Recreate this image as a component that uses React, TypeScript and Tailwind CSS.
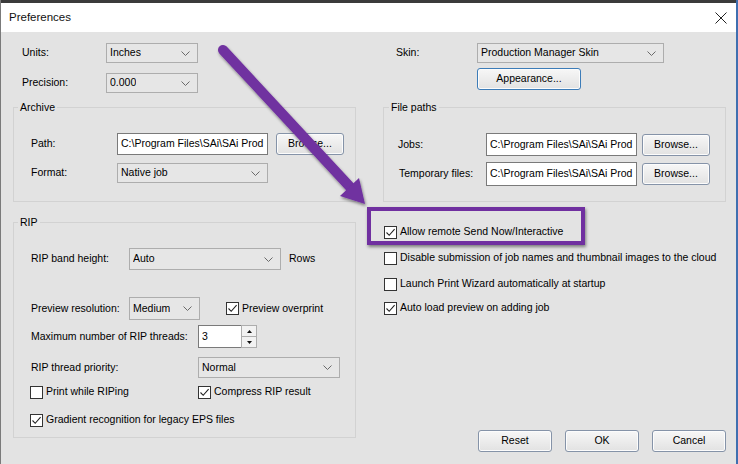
import React from 'react'

const font = { fontFamily: '"Liberation Sans", Arial, sans-serif' }

function Chevron() {
  return (
    <svg width="9" height="5" viewBox="0 0 9 5" className="shrink-0">
      <path d="M0.5 0.5 L4.5 4.5 L8.5 0.5" fill="none" stroke="#6a6a6a" strokeWidth="1" />
    </svg>
  )
}

function Select({ value, w, h = 20 }: { value: string; w: string; h?: number }) {
  return (
    <div
      className={`${w} flex items-center justify-between border border-[#adadad] bg-[#e6e6e6] pl-[3px] pr-[7px]`}
      style={{ height: h }}
    >
      <span className="truncate">{value}</span>
      <Chevron />
    </div>
  )
}

function TextInput({ value, h = 22 }: { value: string; h?: number }) {
  return (
    <div
      className="w-[151px] flex items-center whitespace-nowrap border border-[#7a7a7a] bg-white pl-[3px]"
      style={{ height: h }}
    >
      {value}
    </div>
  )
}

function Button({ label, w, focus }: { label: string; w: string; focus?: boolean }) {
  return (
    <button
      type="button"
      className={`${w} h-[22px] rounded-[3px] border bg-gradient-to-b from-[#f7f7f7] to-[#e2e2e2] text-[10.5px] text-black shadow-[inset_0_0_0_1px_#fcfcfc] ${
        focus ? 'border-[#3c7cb8]' : 'border-[#8593a8]'
      }`}
    >
      {label}
    </button>
  )
}

function Check({ checked, label }: { checked?: boolean; label: string }) {
  return (
    <div className="flex h-[14px] items-center">
      <div className="flex h-[13px] w-[13px] shrink-0 items-center justify-center border border-[#333] bg-white">
        {checked && (
          <svg width="11" height="11" viewBox="0 0 11 11">
            <path d="M1.5 5.5 L4.2 8.3 L9.6 2.2" fill="none" stroke="#222" strokeWidth="1.1" />
          </svg>
        )}
      </div>
      <span className="ml-[3px] whitespace-nowrap">{label}</span>
    </div>
  )
}

function Group({ title, legendMl, className, children }: { title: string; legendMl: string; className: string; children: React.ReactNode }) {
  return (
    <fieldset className={`border border-[#d2d2d2] ${className}`}>
      <legend className={`${legendMl} px-[2px] leading-[14px]`}>{title}</legend>
      {children}
    </fieldset>
  )
}

const PATH = 'C:\\Program Files\\SAi\\SAi Prod'

export default function App() {
  return (
    <div
      className="relative flex h-[464px] w-[738px] flex-col overflow-hidden border-l border-r-2 border-l-[#7a7a7a] border-r-[#3f6fb0] text-[10.5px] text-black"
      style={font}
    >
      {/* strip of the window behind */}
      <div className="h-[3px] shrink-0 bg-[#3b3b3b]" />

      {/* title bar */}
      <div className="flex h-[29px] shrink-0 items-center justify-between bg-white pl-[8px] pr-[9px]">
        <span className="text-[11.5px] text-[#111]">Preferences</span>
        <svg width="12" height="12" viewBox="0 0 12 12">
          <path d="M0.5 0.5 L11.5 11.5 M11.5 0.5 L0.5 11.5" stroke="#222" strokeWidth="1" />
        </svg>
      </div>

      {/* body */}
      <div className="grid flex-1 grid-cols-[343px_343px] gap-x-[27px] bg-[#e3e3e3] pl-[12px]">
        {/* left column */}
        <div className="flex flex-col">
          <div className="mt-[11px] flex items-center">
            <span className="w-[93px] pl-[9px]">Units:</span>
            <Select value="Inches" w="w-[92px]" />
          </div>
          <div className="mt-[10px] flex items-center">
            <span className="w-[93px] pl-[9px]">Precision:</span>
            <Select value="0.000" w="w-[92px]" />
          </div>

          <Group title="Archive" legendMl="ml-[4px]" className="mt-[7px] h-[102px]">
            <div className="mt-[19px] flex items-center">
              <span className="w-[103px] pl-[17px]">Path:</span>
              <TextInput value={PATH} />
              <div className="ml-[8px]">
                <Button label="Browse..." w="w-[68px]" />
              </div>
            </div>
            <div className="mt-[8px] flex items-center">
              <span className="w-[103px] pl-[17px]">Format:</span>
              <Select value="Native job" w="w-[151px]" />
            </div>
          </Group>

          <Group title="RIP" legendMl="ml-[4px]" className="mt-[13px] h-[223px]">
            <div className="mt-[19px] flex items-center">
              <span className="w-[115px] pl-[17px]">RIP band height:</span>
              <Select value="Auto" w="w-[152px]" h={22} />
              <span className="ml-[8px]">Rows</span>
            </div>
            <div className="mt-[27px] flex items-center">
              <span className="w-[115px] pl-[17px]">Preview resolution:</span>
              <Select value="Medium" w="w-[71px]" h={23} />
              <div className="ml-[26px]">
                <Check checked label="Preview overprint" />
              </div>
            </div>
            <div className="mt-[5px] flex items-center">
              <span className="w-[184px] pl-[17px]">Maximum number of RIP threads:</span>
              <div className="flex h-[23px] w-[45px] items-center border border-[#7a7a7a] bg-white pl-[3px]">3</div>
              <div className="-ml-[2px] flex h-[23px] w-[16px] flex-col">
                <div className="flex flex-1 items-center justify-center border border-[#adadad] bg-[#f2f2f2]">
                  <svg width="5" height="3" viewBox="0 0 5 3"><path d="M0 3 L2.5 0 L5 3 Z" fill="#111" /></svg>
                </div>
                <div className="flex flex-1 items-center justify-center border border-t-0 border-[#adadad] bg-[#f2f2f2]">
                  <svg width="5" height="3" viewBox="0 0 5 3"><path d="M0 0 L2.5 3 L5 0 Z" fill="#111" /></svg>
                </div>
              </div>
            </div>
            <div className="mt-[9px] flex items-center">
              <span className="w-[184px] pl-[17px]">RIP thread priority:</span>
              <Select value="Normal" w="w-[142px]" h={21} />
            </div>
            <div className="mt-[7px] flex items-center">
              <div className="w-[184px] pl-[16px]">
                <Check label="Print while RIPing" />
              </div>
              <Check checked label="Compress RIP result" />
            </div>
            <div className="mt-[14px] pl-[16px]">
              <Check checked label="Gradient recognition for legacy EPS files" />
            </div>
          </Group>
        </div>

        {/* right column */}
        <div className="flex flex-col">
          <div className="mt-[11px] flex items-center">
            <span className="w-[94px] pl-[13px]">Skin:</span>
            <Select value="Production Manager Skin" w="w-[187px]" />
          </div>
          <div className="mt-[5px] pl-[94px]">
            <Button label="Appearance..." w="w-[104px]" focus />
          </div>

          <Group title="File paths" legendMl="ml-[5px]" className="mt-[10px] h-[102px]">
            <div className="mt-[19px] flex items-center">
              <span className="w-[102px] pl-[14px]">Jobs:</span>
              <TextInput value={PATH} h={23} />
              <div className="ml-[5px]">
                <Button label="Browse..." w="w-[68px]" />
              </div>
            </div>
            <div className="mt-[6px] flex items-center">
              <span className="w-[102px] pl-[15px]">Temporary files:</span>
              <TextInput value={PATH} h={24} />
              <div className="ml-[5px]">
                <Button label="Browse..." w="w-[68px]" />
              </div>
            </div>
          </Group>

          <div className="mt-[23px] pl-[1px]">
            <Check checked label="Allow remote Send Now/Interactive" />
          </div>
          <div className="mt-[12px] pl-[1px]">
            <Check label="Disable submission of job names and thumbnail images to the cloud" />
          </div>
          <div className="mt-[12px] pl-[1px]">
            <Check label="Launch Print Wizard automatically at startup" />
          </div>
          <div className="mt-[10px] pl-[1px]">
            <Check checked label="Auto load preview on adding job" />
          </div>

          <div className="mt-auto mb-[12px] flex justify-end gap-[13px]">
            <Button label="Reset" w="w-[74px]" />
            <Button label="OK" w="w-[74px]" />
            <Button label="Cancel" w="w-[74px]" />
          </div>
        </div>
      </div>

      {/* annotation: highlight box */}
      <div className="pointer-events-none absolute left-[366px] top-[207px] h-[38px] w-[218px] border-[4px] border-[#7030a0] shadow-[1px_2px_3px_rgba(0,0,0,0.45)]" />

      {/* annotation: arrow */}
      <svg className="pointer-events-none absolute left-0 top-0" width="738" height="464" viewBox="0 0 738 464">
        <defs>
          <filter id="sh" x="-20%" y="-20%" width="140%" height="140%">
            <feDropShadow dx="1" dy="2" stdDeviation="1.5" floodColor="#000" floodOpacity="0.45" />
          </filter>
        </defs>
        <g filter="url(#sh)">
          <line x1="222" y1="50" x2="350" y2="188" stroke="#7030a0" strokeWidth="10" strokeLinecap="round" />
          <polygon points="364,204 358,178 339,196" fill="#7030a0" />
        </g>
      </svg>
    </div>
  )
}
